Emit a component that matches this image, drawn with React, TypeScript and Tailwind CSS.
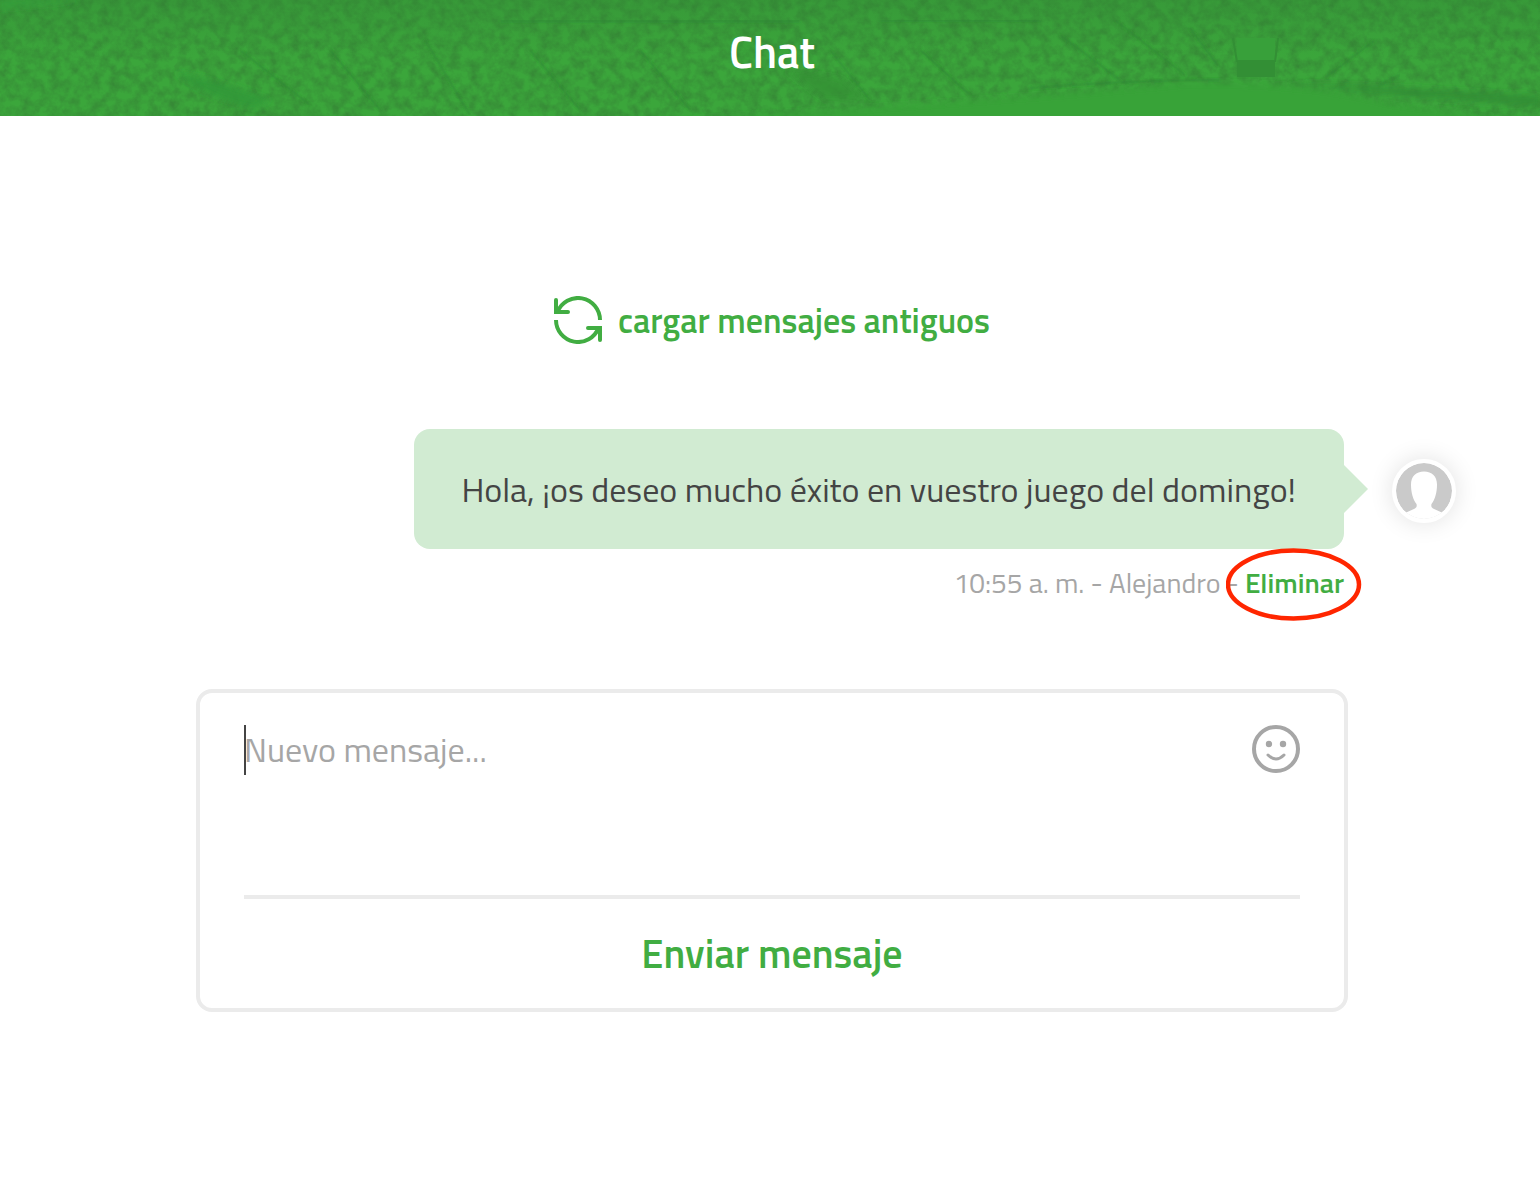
import { useState } from 'react'

const MESSAGES = [
  { id: 1, text: 'Hola, ¡os deseo mucho éxito en vuestro juego del domingo!', time: '10:55 a. m.', author: 'Alejandro' },
]

function RefreshIcon() {
  return (
    <svg viewBox="0 0 48 48" className="size-12 shrink-0" fill="none" stroke="currentColor" strokeWidth="4" aria-hidden="true">
      <path d="M46 24A22 22 0 0 0 3.500 16" />
      <path d="M2 24a22 22 0 0 0 42.500 8" />
      <path d="M14 16H2V4" strokeLinecap="round" strokeLinejoin="miter" />
      <path d="M34 32h12v12" strokeLinecap="round" strokeLinejoin="miter" />
    </svg>
  )
}

function SmileyIcon() {
  return (
    <svg viewBox="0 0 48 48" className="size-12" fill="none" stroke="currentColor" strokeWidth="4" aria-hidden="true">
      <circle cx="24" cy="24" r="22" />
      <path d="M16 30q8 8 16 0" strokeWidth="3" strokeLinecap="round" />
      <circle cx="17" cy="19" r="3.200" fill="currentColor" stroke="none" />
      <circle cx="31" cy="19" r="3.200" fill="currentColor" stroke="none" />
    </svg>
  )
}

function Avatar() {
  return (
    <svg viewBox="0 0 56 56" className="size-16 shrink-0 rounded-full border-4 border-white bg-white shadow-[0_0_24px_rgba(0,0,0,0.12)]" role="img" aria-label="Alejandro">
      <circle cx="28" cy="28" r="28" fill="#cacaca" />
      <path d="M28 8.500c-8 0-13 5-13 13 0 8 2 15 5.500 19.500.5 2 .2 3.500-1.500 4.500L8 50.500a29 29 0 0 0 40 0l-11-5c-1.700-1-2-2.500-1.500-4.500C39 36.500 41 29.500 41 21.500c0-8-5-13-13-13z" fill="#fff" />
    </svg>
  )
}

// Stadium stands and pitch behind the title
function StadiumBackdrop() {
  return (
    <svg viewBox="0 0 1540 116" preserveAspectRatio="xMidYMid slice" className="absolute inset-0 size-full" aria-hidden="true">
      <defs>
        <filter id="crowd" x="0" y="0" width="100%" height="100%" colorInterpolationFilters="sRGB">
          <feTurbulence type="fractalNoise" baseFrequency="0.1" numOctaves="4" seed="7" />
          <feColorMatrix values="0 0 0 0 0.2  0 0 0 0 0.48  0 0 0 0 0.2  1.2 0 0 0 -0.38" />
        </filter>
        <filter id="soft">
          <feGaussianBlur stdDeviation="3" />
        </filter>
        <filter id="line" x="0" y="0" width="100%" height="100%">
          <feGaussianBlur stdDeviation="0.8" />
        </filter>
        <linearGradient id="shade" x1="0" y1="0" x2="0" y2="1">
          <stop offset="0" stopColor="#2f7d33" stopOpacity="0.3" />
          <stop offset="0.5" stopColor="#2f7d33" stopOpacity="0" />
        </linearGradient>
      </defs>
      <rect width="1540" height="116" filter="url(#crowd)" />
      <rect width="1540" height="116" fill="url(#shade)" />
      <g filter="url(#soft)">
        <path d="M175 72q55 12 95 28l-15 8q-45-8-80-36z" fill="#2f983a" fillOpacity="0.8" />
        <path d="M785 70l55 8 25 20-40 2z" fill="#339033" fillOpacity="0.7" />
        <path d="M680 120q340-20 500-36 120-4 210 20l150 20z" fill="#38a338" />
        <path d="M1290 82l250 14v10l-160-12z" fill="#328e34" fillOpacity="0.9" />
        <path d="M0 0h80L0 8z" fill="#35a13a" />
      </g>
      <g stroke="#2f8233" strokeOpacity="0.6" strokeWidth="2" fill="none" filter="url(#line)">
        <path d="M240 50l70 55M330 50l50 60M425 40l45 75M530 50l50 60M640 50l50 60M830 50l40 50M920 50l50 45M1060 35l60 45M1115 20l70 55M1190 28l28 38M1375 40l-50 38M1400 75l-20 10M500 21h300M880 20h160M1030 88q100-8 190-8" />
      </g>
      <path d="M1237 38h38v22h-38z" fill="#38a03a" />
      <path d="M1237 60h38v17h-38z" fill="#338f35" />
      <path d="M1233 38l4 24M1278 38l-3 24" stroke="#338f35" strokeWidth="2" />
    </svg>
  )
}

function Message({ message, onDelete }: { message: (typeof MESSAGES)[number]; onDelete: () => void }) {
  return (
    <li className="flex items-start justify-end gap-12">
      <div className="flex flex-col items-end">
        <div className="relative rounded-2xl bg-[#d1ebd2] px-12 py-9">
          <p className="text-[34px] leading-12 text-[#444]">{message.text}</p>
          <svg viewBox="0 0 24 48" className="absolute top-9 left-full h-12 w-6 text-[#d1ebd2]" aria-hidden="true">
            <path d="M0 0l24 24L0 48z" fill="currentColor" />
          </svg>
        </div>
        <div className="mt-[14px] flex gap-1.5 text-[28px] leading-10 text-[#a6a6a6]">
          <span>{message.time} - {message.author} -</span>
          <span className="relative">
            <button type="button" onClick={onDelete} className="cursor-pointer font-semibold text-[#41ad42]">
              Eliminar
            </button>
            <svg viewBox="0 0 136 76" className="pointer-events-none absolute top-1/2 left-1/2 h-[76px] w-[136px] -translate-x-1/2 -translate-y-1/2" aria-hidden="true">
              <ellipse cx="67.500" cy="39.500" rx="65.500" ry="34" fill="none" stroke="#ff2600" strokeWidth="4.500" />
            </svg>
          </span>
        </div>
      </div>
      <div className="mt-[30px]">
        <Avatar />
      </div>
    </li>
  )
}

export default function App() {
  const [messages, setMessages] = useState(MESSAGES)
  const [draft, setDraft] = useState('')

  return (
    <div className="min-h-screen bg-white pb-24 font-['Titillium_Web','Roboto',sans-serif]">
      <header className="relative flex h-29 items-center justify-center overflow-hidden bg-[#3ba63b] pb-3 pl-1">
        <StadiumBackdrop />
        <h1 className="relative text-[44px] leading-14 font-semibold text-white">Chat</h1>
      </header>

      <main className="pt-44 pl-1">
        <div className="flex justify-center">
          <button type="button" className="flex cursor-pointer items-center gap-4 text-[34px] leading-14 font-semibold text-[#41ad42]">
            <RefreshIcon />
            cargar mensajes antiguos
          </button>
        </div>

        <ul className="mt-[81px] pr-[84px]">
          {messages.map((message) => (
            <Message
              key={message.id}
              message={message}
              onDelete={() => setMessages((list) => list.filter((m) => m.id !== message.id))}
            />
          ))}
        </ul>

        <form
          onSubmit={(e) => e.preventDefault()}
          className="mx-auto mt-[86px] max-w-[1152px] rounded-2xl border-4 border-[#ebebeb] px-11 pt-8"
        >
          <div className="flex items-start gap-4 border-b-4 border-[#ebebeb]">
            <div className="relative flex-1">
              <textarea
                aria-label="Nuevo mensaje"
                placeholder="Nuevo mensaje..."
                value={draft}
                onChange={(e) => setDraft(e.target.value)}
                className="block h-[170px] w-full resize-none text-[34px] leading-12 text-[#444] outline-none placeholder:text-[#a6a6a6]"
              />
              {draft === '' && <span className="pointer-events-none absolute top-0 left-0 h-[50px] w-0.5 bg-[#444]" />}
            </div>
            <button type="button" aria-label="Emoji" className="cursor-pointer text-[#a6a6a6]">
              <SmileyIcon />
            </button>
          </div>
          <button type="submit" className="h-[109px] w-full cursor-pointer text-[40px] leading-14 font-semibold text-[#41ad42]">
            Enviar mensaje
          </button>
        </form>
      </main>
    </div>
  )
}
